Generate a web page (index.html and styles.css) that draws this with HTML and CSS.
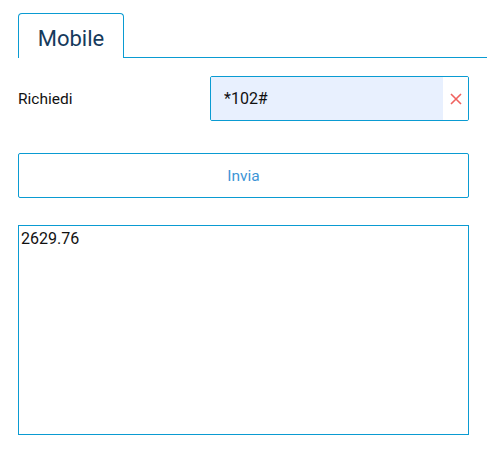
FILE: index.html
```html
<!DOCTYPE html>
<html lang="it">
<head>
  <meta charset="UTF-8">
  <title>Mobile</title>
  <link rel="stylesheet" href="styles.css">
</head>
<body>
  <div class="page">
    <!-- tab superiore -->
    <nav class="tabs">
      <div class="tab">Mobile</div>
      <div class="tab-rest"></div>
    </nav>

    <div class="row">
      <label class="label" for="ussd">Richiedi</label>
      <div class="field">
        <input id="ussd" class="field-input" type="text" value="*102#">
        <span class="field-clear">
          <svg width="14" height="14" viewBox="0 0 14 14">
            <path d="M2 2 L12 12 M12 2 L2 12" stroke="#f0625f" stroke-width="1.6" fill="none"/>
          </svg>
        </span>
      </div>
    </div>

    <button class="send">Invia</button>

    <div class="output">2629.76</div>
  </div>
</body>
</html>
```

FILE: styles.css
```css
html, body {
  margin: 0;
  padding: 0;
  background: #ffffff;
  font-family: Roboto, 'Liberation Sans', sans-serif;
  color: #111;
}
*, *::before, *::after {
  box-sizing: border-box;
}
.page {
  padding: 13px 18px 0 18px;
  width: 487px;
}
/* tab */
.tabs {
  display: flex;
  align-items: flex-end;
  margin-right: -18px;
}
.tab {
  width: 106px;
  height: 45px;
  border: 1px solid #0a9bd2;
  border-bottom: none;
  border-radius: 4px 4px 0 0;
  font-size: 22px;
  color: #163a5c;
  display: flex;
  align-items: center;
  justify-content: center;
  padding-top: 4px;
}
.tab-rest {
  flex: 1;
  border-bottom: 1px solid #0a9bd2;
}
/* riga richiesta */
.row {
  display: flex;
  align-items: center;
  margin-top: 18px;
}
.label {
  width: 192px;
  font-size: 15.5px;
  color: #111;
}
.field {
  flex: 1;
  height: 45px;
  display: flex;
  border: 1px solid #0a9bd2;
  border-radius: 2px;
  overflow: hidden;
}
.field-input {
  flex: 1;
  min-width: 0;
  border: none;
  outline: none;
  background: #e8f0fe;
  font-family: inherit;
  font-size: 16px;
  color: #111;
  padding: 0 0 0 13px;
}
.field-clear {
  width: 25px;
  display: flex;
  align-items: center;
  justify-content: center;
  background: #fff;
}
/* pulsante */
.send {
  display: block;
  width: 100%;
  height: 45px;
  margin-top: 32px;
  background: #fff;
  border: 1px solid #0a9bd2;
  border-radius: 2px;
  font-family: inherit;
  font-size: 15.5px;
  color: #3d95d6;
}
/* risultato */
.output {
  margin-top: 27px;
  height: 210px;
  border: 1px solid #0a9bd2;
  padding: 3px 2px;
  font-size: 16px;
  color: #111;
}
```
